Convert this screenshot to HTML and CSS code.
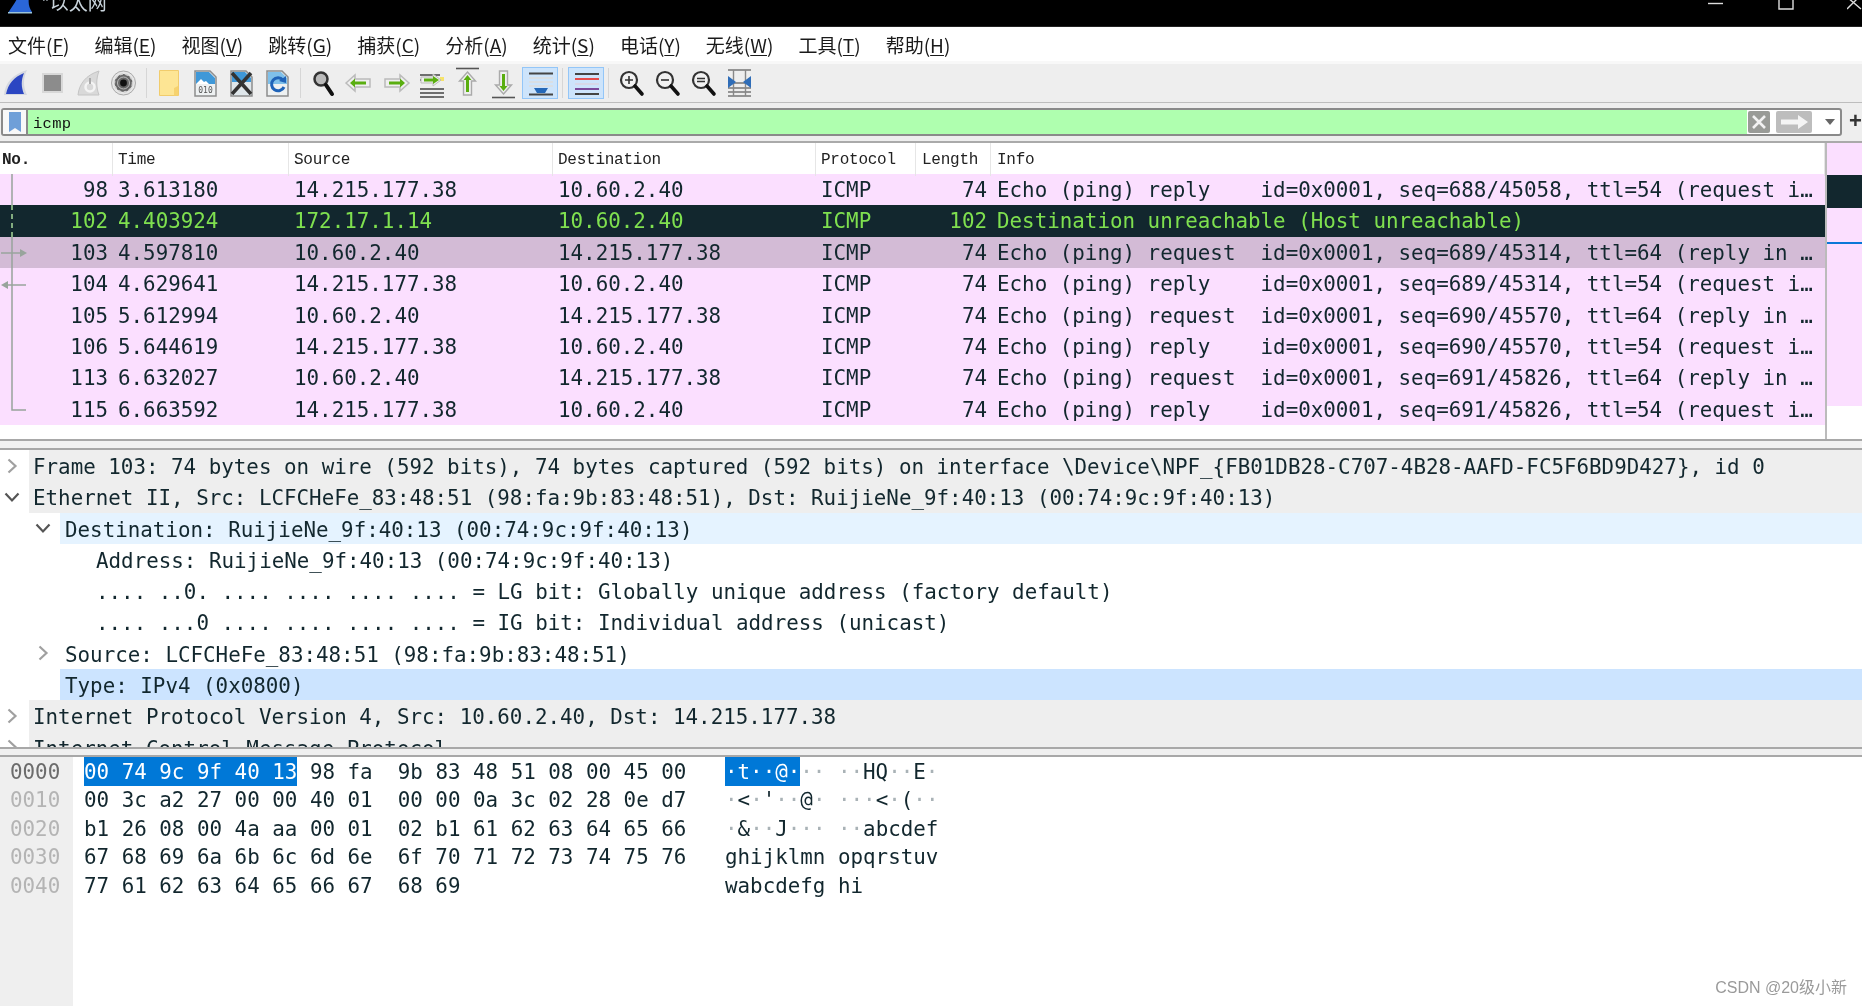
FILE: index.html
```html
<!DOCTYPE html>
<html lang="zh-CN">
<head>
<meta charset="utf-8">
<title>Wireshark</title>
<link rel="stylesheet" href="styles.css">
</head>
<body>
<div class="app">
  <header class="titlebar">
    <div class="title-left">
      <svg class="title-icon" width="26" height="26" viewBox="0 0 26 26"><path d="M1 13C4 8 8 3 11 -3H22C21 3 22 8 25 12Z" fill="#2a66d8"/><path d="M1 12h24v1.500H1z" fill="#9cc4d8"/></svg>
      <span class="title-text">*以太网</span>
    </div>
    <div class="win-ctl">
      <svg width="16" height="26" viewBox="0 0 16 26"><path d="M0 3.500h15" stroke="#ddd" stroke-width="1.400"/></svg>
      <svg width="16" height="26" viewBox="0 0 16 26"><path d="M1 -2v11h14V-2" fill="none" stroke="#ddd" stroke-width="1.400"/></svg>
      <svg width="16" height="26" viewBox="0 0 16 26"><path d="M0 9L10 -1M0 -3L14 9" stroke="#ddd" stroke-width="1.400"/></svg>
    </div>
  </header>

  <nav class="menubar">
    <span class="mi">文件(<u>F</u>)</span>
    <span class="mi">编辑(<u>E</u>)</span>
    <span class="mi">视图(<u>V</u>)</span>
    <span class="mi">跳转(<u>G</u>)</span>
    <span class="mi">捕获(<u>C</u>)</span>
    <span class="mi">分析(<u>A</u>)</span>
    <span class="mi">统计(<u>S</u>)</span>
    <span class="mi">电话(<u>Y</u>)</span>
    <span class="mi">无线(<u>W</u>)</span>
    <span class="mi">工具(<u>T</u>)</span>
    <span class="mi">帮助(<u>H</u>)</span>
  </nav>

  <div class="toolbar">
    <span class="tb"><svg viewBox="0 0 31 34"><path d="M4 29C5 17 13 8 27 4C23 12 23 21 27 29Z" fill="#d5d8e0" /><path d="M6 28C8 18 14 11 24 7C21 14 21 21 24 28Z" fill="#2b46c2"/></svg></span>
    <span class="tb"><svg viewBox="0 0 31 34"><rect x="6" y="7" width="21" height="20" fill="#d8d8d8"/><rect x="8" y="9" width="17" height="16" fill="#8c8c8c"/></svg></span>
    <span class="tb"><svg viewBox="0 0 31 34"><path d="M6 29C7 18 14 9 27 5C24 13 24 21 27 29Z" fill="#d9d9d9" stroke="#c4c4c4"/><circle cx="18" cy="21" r="4.500" fill="none" stroke="#f4f4f4" stroke-width="2.500"/><path d="M18 12v6" stroke="#aaa" stroke-width="2"/></svg></span>
    <span class="tb"><svg viewBox="0 0 31 34"><circle cx="15.500" cy="17" r="12" fill="#e6e6e6" stroke="#aaa"/><circle cx="15.500" cy="17" r="9" fill="#666"/><circle cx="15.500" cy="17" r="9" fill="none" stroke="#d0d0d0" stroke-width="1.500" stroke-dasharray="3 2.500"/><circle cx="15.500" cy="17" r="3.400" fill="#111"/><circle cx="15.500" cy="17" r="6" fill="none" stroke="#bbb"/></svg></span>
    <span class="tb-sep"></span>
    <span class="tb"><svg viewBox="0 0 31 34"><path d="M5.500 4.500h19v25h-19z" fill="#fde594" stroke="#f1cc6c"/><path d="M24 20l-4 2v7.500h4z" fill="#f6d26f"/></svg></span>
    <span class="tb"><svg viewBox="0 0 31 34"><path d="M5 5h15l6 6v19H5z" fill="#eef1f2" stroke="#8d8d8d" stroke-width="1.500"/><path d="M6 6h13l6 6v6H6z" fill="#3f98d8"/><path d="M6 18l5-5 3 3 2-1 3 3z" fill="#fff"/><text class="bin" x="15.500" y="27">010</text></svg></span>
    <span class="tb"><svg viewBox="0 0 31 34"><path d="M5 5h15l6 6v19H5z" fill="#dfe6ea" stroke="#8d8d8d" stroke-width="1.500"/><path d="M6 6h13l6 6v4H6z" fill="#3f98d8"/><path d="M6 7l19 21M25 7L6 28" stroke="#333" stroke-width="3.500"/></svg></span>
    <span class="tb"><svg viewBox="0 0 31 34"><path d="M5 5h15l6 6v19H5z" fill="#eef1f2" stroke="#8d8d8d" stroke-width="1.500"/><path d="M6 6h13l6 6v6H6z" fill="#7fc0ea"/><path d="M21 14a6.500 6.500 0 1 0 1 7" fill="none" stroke="#1f63b8" stroke-width="3"/><path d="M17 15l7 2 0-7z" fill="#1f63b8"/></svg></span>
    <span class="tb-sep"></span>
    <span class="tb"><svg viewBox="0 0 31 34"><circle cx="13" cy="13" r="6.500" fill="#bbb" stroke="#333" stroke-width="2.500"/><path d="M18 19l6 9" stroke="#111" stroke-width="4" stroke-linecap="round"/></svg></span>
    <span class="tb"><svg viewBox="0 0 31 34"><path d="M2 17l9-8v4h15v8H11v4z" fill="#efefef" stroke="#bbb" stroke-width="1.500"/><path d="M6 17l5-4.500v3h11v3H11v3z" fill="#5aae10"/></svg></span>
    <span class="tb"><svg viewBox="0 0 31 34"><path d="M29 17l-9-8v4H5v8h15v4z" fill="#efefef" stroke="#bbb" stroke-width="1.500"/><path d="M25 17l-5-4.500v3H9v3h11v3z" fill="#5aae10"/></svg></span>
    <span class="tb"><svg viewBox="0 0 31 34"><path d="M4 9h20M4 14h5M4 23h24M4 27h24M4 31h24" stroke="#444" stroke-width="1.600"/><path d="M24 11h4v4h-4z" fill="#f6e36a"/><path d="M25 14l-8-6v3H5v6h12v3z" fill="#eee" stroke="#bbb"/><path d="M23 14l-6-4v2.500H8v3h9V18z" fill="#5aae10"/></svg></span>
    <span class="tb"><svg viewBox="0 0 31 34"><path d="M4 2.500h23" stroke="#555" stroke-width="1.600"/><path d="M15.500 6l8 9h-4v14h-8V15h-4z" fill="#efefef" stroke="#aaa" stroke-width="1.400"/><path d="M15.500 9l4 5h-2.500v12h-3V14h-2.500z" fill="#5aae10"/></svg></span>
    <span class="tb"><svg viewBox="0 0 31 34"><path d="M4 31.500h23" stroke="#555" stroke-width="1.600"/><path d="M15.500 28l8-9h-4V5h-8v14h-4z" fill="#efefef" stroke="#aaa" stroke-width="1.400"/><path d="M15.500 25l4-5h-2.500V8h-3v12h-2.500z" fill="#5aae10"/></svg></span>
    <span class="tb tb-on"><svg viewBox="0 0 36 32"><path d="M7 6.500h24M7 27.500h24" stroke="#444" stroke-width="1.800"/><path d="M7 11h24M7 15h24M7 19h24" stroke="#ddd" stroke-width="1.500"/><path d="M12 21h14l-3 5h-8z" fill="#2468b8"/></svg></span>
    <span class="tb-sep"></span>
    <span class="tb tb-on"><svg viewBox="0 0 36 32"><path d="M7 7h24M7 27h24" stroke="#444" stroke-width="1.800"/><path d="M7 12h24" stroke="#e34b4b" stroke-width="2"/><path d="M7 17h24" stroke="#d8d8e8" stroke-width="2"/><path d="M7 22h24" stroke="#7b4a9b" stroke-width="2"/></svg></span>
    <span class="tb-sep"></span>
    <span class="tb"><svg viewBox="0 0 31 34"><circle cx="13" cy="14" r="8" fill="#f2f2f2" stroke="#333" stroke-width="2.200"/><path d="M9 14h8M13 10v8" stroke="#333" stroke-width="1.600"/><path d="M19 20l7 8" stroke="#111" stroke-width="3.600" stroke-linecap="round"/></svg></span>
    <span class="tb"><svg viewBox="0 0 31 34"><circle cx="13" cy="14" r="8" fill="#f2f2f2" stroke="#333" stroke-width="2.200"/><path d="M9 14h8" stroke="#333" stroke-width="1.600"/><path d="M19 20l7 8" stroke="#111" stroke-width="3.600" stroke-linecap="round"/></svg></span>
    <span class="tb"><svg viewBox="0 0 31 34"><circle cx="13" cy="14" r="8" fill="#f2f2f2" stroke="#333" stroke-width="2.200"/><path d="M9 12.500h8M9 15.500h8" stroke="#333" stroke-width="1.500"/><path d="M19 20l7 8" stroke="#111" stroke-width="3.600" stroke-linecap="round"/></svg></span>
    <span class="tb"><svg viewBox="0 0 31 34"><path d="M4 4h23M4 30h23M4 17h23M4 22h23M4 26h23" stroke="#777" stroke-width="1.400"/><path d="M9.500 4v26M21.500 4v26" stroke="#888" stroke-width="1.400"/><path d="M4 10l8 6-8 6zM27 10l-8 6 8 6z" fill="#2f6db8"/></svg></span>
  </div>

  <div class="filter">
    <div class="filter-box">
      <span class="bm"><svg width="12" height="20" viewBox="0 0 12 20"><path d="M0 0h12v20l-6-4-6 4z" fill="#6f9fd8"/></svg></span>
      <span class="filter-input">icmp</span>
      <span class="f-x"><svg width="22" height="22" viewBox="0 0 22 22"><path d="M5 5l12 12M17 5L5 17" stroke="#f2f2f2" stroke-width="2.600"/></svg></span>
      <span class="f-go"><svg width="36" height="22" viewBox="0 0 36 22"><path d="M5 8.500h17V4l10 7-10 7v-4.500H5z" fill="#f4f4f4"/></svg></span>
      <span class="f-drop"><svg width="12" height="8" viewBox="0 0 12 8"><path d="M1 1h10L6 7z" fill="#666"/></svg></span>
    </div>
    <span class="f-plus">+</span>
  </div>

  <section class="packets">
    <div class="plist">
      <div class="cols phead">
        <span class="hc">No.</span><span class="hc">Time</span><span class="hc">Source</span><span class="hc">Destination</span><span class="hc">Protocol</span><span class="hc">Length</span><span class="hc">Info</span>
      </div>
      <div class="cols row"><span class="num">98</span><span class="c">3.613180</span><span class="c">14.215.177.38</span><span class="c">10.60.2.40</span><span class="c">ICMP</span><span class="len">74</span><span class="c">Echo (ping) reply    id=0x0001, seq=688/45058, ttl=54 (request i…</span></div>
      <div class="cols row err"><span class="num">102</span><span class="c">4.403924</span><span class="c">172.17.1.14</span><span class="c">10.60.2.40</span><span class="c">ICMP</span><span class="len">102</span><span class="c">Destination unreachable (Host unreachable)</span></div>
      <div class="cols row sel"><span class="num">103</span><span class="c">4.597810</span><span class="c">10.60.2.40</span><span class="c">14.215.177.38</span><span class="c">ICMP</span><span class="len">74</span><span class="c">Echo (ping) request  id=0x0001, seq=689/45314, ttl=64 (reply in …</span></div>
      <div class="cols row"><span class="num">104</span><span class="c">4.629641</span><span class="c">14.215.177.38</span><span class="c">10.60.2.40</span><span class="c">ICMP</span><span class="len">74</span><span class="c">Echo (ping) reply    id=0x0001, seq=689/45314, ttl=54 (request i…</span></div>
      <div class="cols row"><span class="num">105</span><span class="c">5.612994</span><span class="c">10.60.2.40</span><span class="c">14.215.177.38</span><span class="c">ICMP</span><span class="len">74</span><span class="c">Echo (ping) request  id=0x0001, seq=690/45570, ttl=64 (reply in …</span></div>
      <div class="cols row"><span class="num">106</span><span class="c">5.644619</span><span class="c">14.215.177.38</span><span class="c">10.60.2.40</span><span class="c">ICMP</span><span class="len">74</span><span class="c">Echo (ping) reply    id=0x0001, seq=690/45570, ttl=54 (request i…</span></div>
      <div class="cols row"><span class="num">113</span><span class="c">6.632027</span><span class="c">10.60.2.40</span><span class="c">14.215.177.38</span><span class="c">ICMP</span><span class="len">74</span><span class="c">Echo (ping) request  id=0x0001, seq=691/45826, ttl=64 (reply in …</span></div>
      <div class="cols row"><span class="num">115</span><span class="c">6.663592</span><span class="c">14.215.177.38</span><span class="c">10.60.2.40</span><span class="c">ICMP</span><span class="len">74</span><span class="c">Echo (ping) reply    id=0x0001, seq=691/45826, ttl=54 (request i…</span></div>
      <svg class="rel" width="40" height="252" viewBox="0 0 40 252">
        <path d="M12 0V31M12 63V236H26" fill="none" stroke="#98a49c" stroke-width="1.500"/>
        <path d="M12 31V63" fill="none" stroke="#a8d89a" stroke-width="1.500" stroke-dasharray="5 4"/>
        <path d="M1 79H22" stroke="#98a49c" stroke-width="1.500"/><path d="M20 75l7 4-7 4z" fill="#98a49c"/>
        <path d="M7 111H26" stroke="#98a49c" stroke-width="1.500"/><path d="M8 107l-7 4 7 4z" fill="#98a49c"/>
      </svg>
    </div>
    <aside class="minimap">
      <div class="mm-head"></div>
      <div class="mm-dark"></div>
      <div class="mm-pink"></div>
      <div class="mm-cur"></div>
      <div class="mm-pink2"></div>
    </aside>
  </section>

  <div class="split"></div>

  <section class="details">
    <div class="tr l0"><span class="tw"><svg width="12" height="16" viewBox="0 0 12 16"><path d="M2.500 1.500l7 6.500-7 6.500" class="cl"/></svg></span><div class="tl top">Frame 103: 74 bytes on wire (592 bits), 74 bytes captured (592 bits) on interface \Device\NPF_{FB01DB28-C707-4B28-AAFD-FC5F6BD9D427}, id 0</div></div>
    <div class="tr l0"><span class="tw"><svg width="16" height="12" viewBox="0 0 16 12"><path d="M1.500 2.500l6.500 7 6.500-7" class="op"/></svg></span><div class="tl top">Ethernet II, Src: LCFCHeFe_83:48:51 (98:fa:9b:83:48:51), Dst: RuijieNe_9f:40:13 (00:74:9c:9f:40:13)</div></div>
    <div class="tr l1"><span class="tw"><svg width="16" height="12" viewBox="0 0 16 12"><path d="M1.500 2.500l6.500 7 6.500-7" class="op"/></svg></span><div class="tl hover">Destination: RuijieNe_9f:40:13 (00:74:9c:9f:40:13)</div></div>
    <div class="tr l2"><div class="tl">Address: RuijieNe_9f:40:13 (00:74:9c:9f:40:13)</div></div>
    <div class="tr l2"><div class="tl">.... ..0. .... .... .... .... = LG bit: Globally unique address (factory default)</div></div>
    <div class="tr l2"><div class="tl">.... ...0 .... .... .... .... = IG bit: Individual address (unicast)</div></div>
    <div class="tr l1"><span class="tw"><svg width="12" height="16" viewBox="0 0 12 16"><path d="M2.500 1.500l7 6.500-7 6.500" class="cl"/></svg></span><div class="tl">Source: LCFCHeFe_83:48:51 (98:fa:9b:83:48:51)</div></div>
    <div class="tr l1"><span class="tw"></span><div class="tl picked">Type: IPv4 (0x0800)</div></div>
    <div class="tr l0"><span class="tw"><svg width="12" height="16" viewBox="0 0 12 16"><path d="M2.500 1.500l7 6.500-7 6.500" class="cl"/></svg></span><div class="tl top">Internet Protocol Version 4, Src: 10.60.2.40, Dst: 14.215.177.38</div></div>
    <div class="tr l0"><span class="tw"><svg width="12" height="16" viewBox="0 0 12 16"><path d="M2.500 1.500l7 6.500-7 6.500" class="cl"/></svg></span><div class="tl top">Internet Control Message Protocol</div></div>
  </section>

  <div class="split split-hex"></div>

  <section class="hex">
    <div class="offsets">
      <div class="off off-on">0000</div>
      <div class="off">0010</div>
      <div class="off">0020</div>
      <div class="off">0030</div>
      <div class="off">0040</div>
    </div>
    <div class="bytes">
      <div class="hl"><span class="hi">00 74 9c 9f 40 13</span> 98 fa  9b 83 48 51 08 00 45 00</div>
      <div class="hl">00 3c a2 27 00 00 40 01  00 00 0a 3c 02 28 0e d7</div>
      <div class="hl">b1 26 08 00 4a aa 00 01  02 b1 61 62 63 64 65 66</div>
      <div class="hl">67 68 69 6a 6b 6c 6d 6e  6f 70 71 72 73 74 75 76</div>
      <div class="hl">77 61 62 63 64 65 66 67  68 69</div>
    </div>
    <div class="ascii">
      <div class="hl"><span class="hi">·t··@·</span><i>·· ··</i>HQ<i>··</i>E<i>·</i></div>
      <div class="hl"><i>·</i>&lt;<i>·</i>'<i>··</i>@<i>· ···</i>&lt;<i>·</i>(<i>··</i></div>
      <div class="hl"><i>·</i>&amp;<i>··</i>J<i>··· ··</i>abcdef</div>
      <div class="hl">ghijklmn opqrstuv</div>
      <div class="hl">wabcdefg hi</div>
    </div>
    <div class="mark">CSDN @20级小新</div>
  </section>
</div>
</body>
</html>
```
FILE: styles.css
```css
* { box-sizing: border-box; }
html, body { margin: 0; height: 100%; background: #fff; overflow: hidden; }
.app {
  position: relative;
  width: 1862px; height: 1006px; overflow: hidden;
  display: flex; flex-direction: column;
  font-family: "DejaVu Sans Mono", "Noto Sans CJK SC", monospace;
  filter: blur(0.5px);
}

.titlebar { flex: 0 0 27px; background: #000; display: flex; justify-content: space-between; overflow: hidden; border-bottom: 1px solid #222; }
.title-left { display: flex; align-items: flex-start; padding-left: 7px; }
.title-icon { flex: none; }
.title-text { font: 19px/20px "Noto Sans CJK SC", sans-serif; color: #c9d4dc; margin: -8px 0 0 8px; }
.win-ctl { display: flex; gap: 53px; margin-right: -1px; }
.win-ctl svg:first-child { margin-right: 1px; }

.menubar { flex: 0 0 34px; background: #fff; display: flex; align-items: center; gap: 25px; padding: 0 0 0 8px; }
.mi { font: 19px/33px "Noto Sans CJK SC", sans-serif; color: #1a1a1a; }
.mi u { text-underline-offset: 2px; }

.toolbar { flex: 0 0 42px; background: #eeeeee; border-top: 3px solid #f8f8f8; border-bottom: 1px solid #bdbdbd; display: flex; align-items: center; gap: 5px; }
.tb { flex: 0 0 31px; height: 34px; display: block; }
.tb svg { display: block; width: 100%; height: 100%; }
.tb-on { flex: 0 0 36px; height: 32px; margin: 0 -2.5px; background: #cde4fb; border: 1px solid #93c6f8; }
.tb-on svg { margin: -1px; width: 36px; height: 32px; }
.tb-sep { flex: 0 0 1px; height: 30px; margin: 0 2px; background: #d6d6d6; }
.bin { font: 8px "DejaVu Sans Mono", monospace; fill: #555; text-anchor: middle; }

.filter { flex: 0 0 40px; background: #eeeeee; padding: 5px 0 0 1px; display: flex; align-items: flex-start; border-bottom: 2px solid #aaaaaa; }
.filter-box { width: 1841px; height: 28px; border: 2px solid #8a8a8a; border-radius: 3px; background: #fff; display: flex; align-items: center; overflow: hidden; }
.bm { flex: 0 0 25px; height: 100%; display: flex; align-items: center; justify-content: center; background: #f8f8f8; border-right: 2px solid #8a8a8a; }
.filter-input { flex: 1 1 auto; height: 100%; background: #afffaf; font: 15.500px/29px "Liberation Mono", monospace; letter-spacing: .3px; color: #111; padding-left: 5px; }
.f-x { flex: 0 0 22px; height: 22px; margin-left: 1px; background: #999b97; border-radius: 2px; }
.f-go { flex: 0 0 36px; height: 22px; margin-left: 6px; background: #bdbdbd; border-radius: 2px; }
.f-drop { flex: 0 0 28px; display: flex; align-items: center; justify-content: center; }
.f-drop svg { margin-left: 8px; }
.f-plus { font: bold 22px/26px "Liberation Sans", sans-serif; color: #333; margin-left: 7px; }

.packets { flex: 0 0 296px; display: flex; background: #fff; }
.plist { position: relative; flex: 0 0 1827px; border-right: 2px solid #bbbbbb; }
.cols { display: grid; grid-template-columns: 113px 176px 264px 263px 100px 75px 1fr; }
.phead { height: 31px; }
.hc { font: 16px/31px "Liberation Mono", monospace; letter-spacing: -.25px; color: #222; padding: 2px 0 0 5px; border-right: 1px solid #e6e6e6; }
.hc:first-child { padding-left: 2px; font-weight: 700; }
.hc:nth-child(n+6) { padding-left: 6px; }
.row { height: 31.400px; background: #fbdfff; color: #12272e; font-size: 20.850px; line-height: 32px; white-space: pre; overflow: hidden; }
.err { background: #12272e; color: #7fe04f; }
.sel { background: #d3bbd6; }
.num { text-align: right; padding-right: 5px; }
.c { padding-left: 5px; overflow: hidden; }
.c:last-child { padding-left: 6px; }
.len { text-align: right; padding-right: 4px; }
.rel { position: absolute; left: 0; top: 31px; }

.minimap { flex: 1 1 auto; display: flex; flex-direction: column; }
.mm-head { height: 32px; background: #fbdfff; }
.mm-dark { height: 33px; background: #12272e; }
.mm-pink { height: 34px; background: #fbdfff; }
.mm-cur { height: 2px; background: #0a78d8; }
.mm-pink2 { height: 162px; background: #fbdfff; }

.split { flex: 0 0 11px; background: #f2f2f2; border-top: 2px solid #a8a8a8; border-bottom: 2px solid #a8a8a8; }
.split-hex { flex: 0 0 10px; background: #f0f0f0; }

.details { flex: 0 0 297px; overflow: hidden; background: #fff; color: #12272e; font-size: 20.850px; }
.tr { display: flex; height: 31.300px; line-height: 30px; white-space: pre; }
.tw { flex: 0 0 29px; display: flex; align-items: center; justify-content: center; padding-right: 5px; }
.l1 { padding-left: 31px; }
.l2 { padding-left: 91px; }
.tl { flex: 1 1 auto; padding: 2px 0 0 4px; overflow: hidden; }
.l1 .tl { padding-left: 5px; }
.l2 .tl { padding-left: 5px; }
.top { background: #eeeeee; }
.hover { background: #e5f3ff; }
.picked { background: #cce4ff; }
.cl { fill: none; stroke: #a0a0a0; stroke-width: 2.200; }
.op { fill: none; stroke: #555; stroke-width: 2.200; }

.hex { flex: 1 1 auto; position: relative; display: flex; background: #fff; color: #12272e; font-size: 20.850px; }
.hl, .off { height: 28.400px; line-height: 31px; white-space: pre; }
.offsets { flex: 0 0 73px; background: #efefef; padding-left: 10px; color: #b4b4b4; }
.off-on { color: #6c6c6c; }
.bytes { flex: 0 0 652px; padding-left: 11px; }
.ascii { flex: 1 1 auto; }
.ascii i { font-style: normal; color: #a9b2b6; }
.hi { display: inline-block; background: #0078d7; color: #fff; height: 29px; }
.mark { position: absolute; right: 15px; bottom: 8px; font: 16px/20px "Liberation Sans", "Noto Sans CJK SC", sans-serif; color: #9a9a9a; }
```
